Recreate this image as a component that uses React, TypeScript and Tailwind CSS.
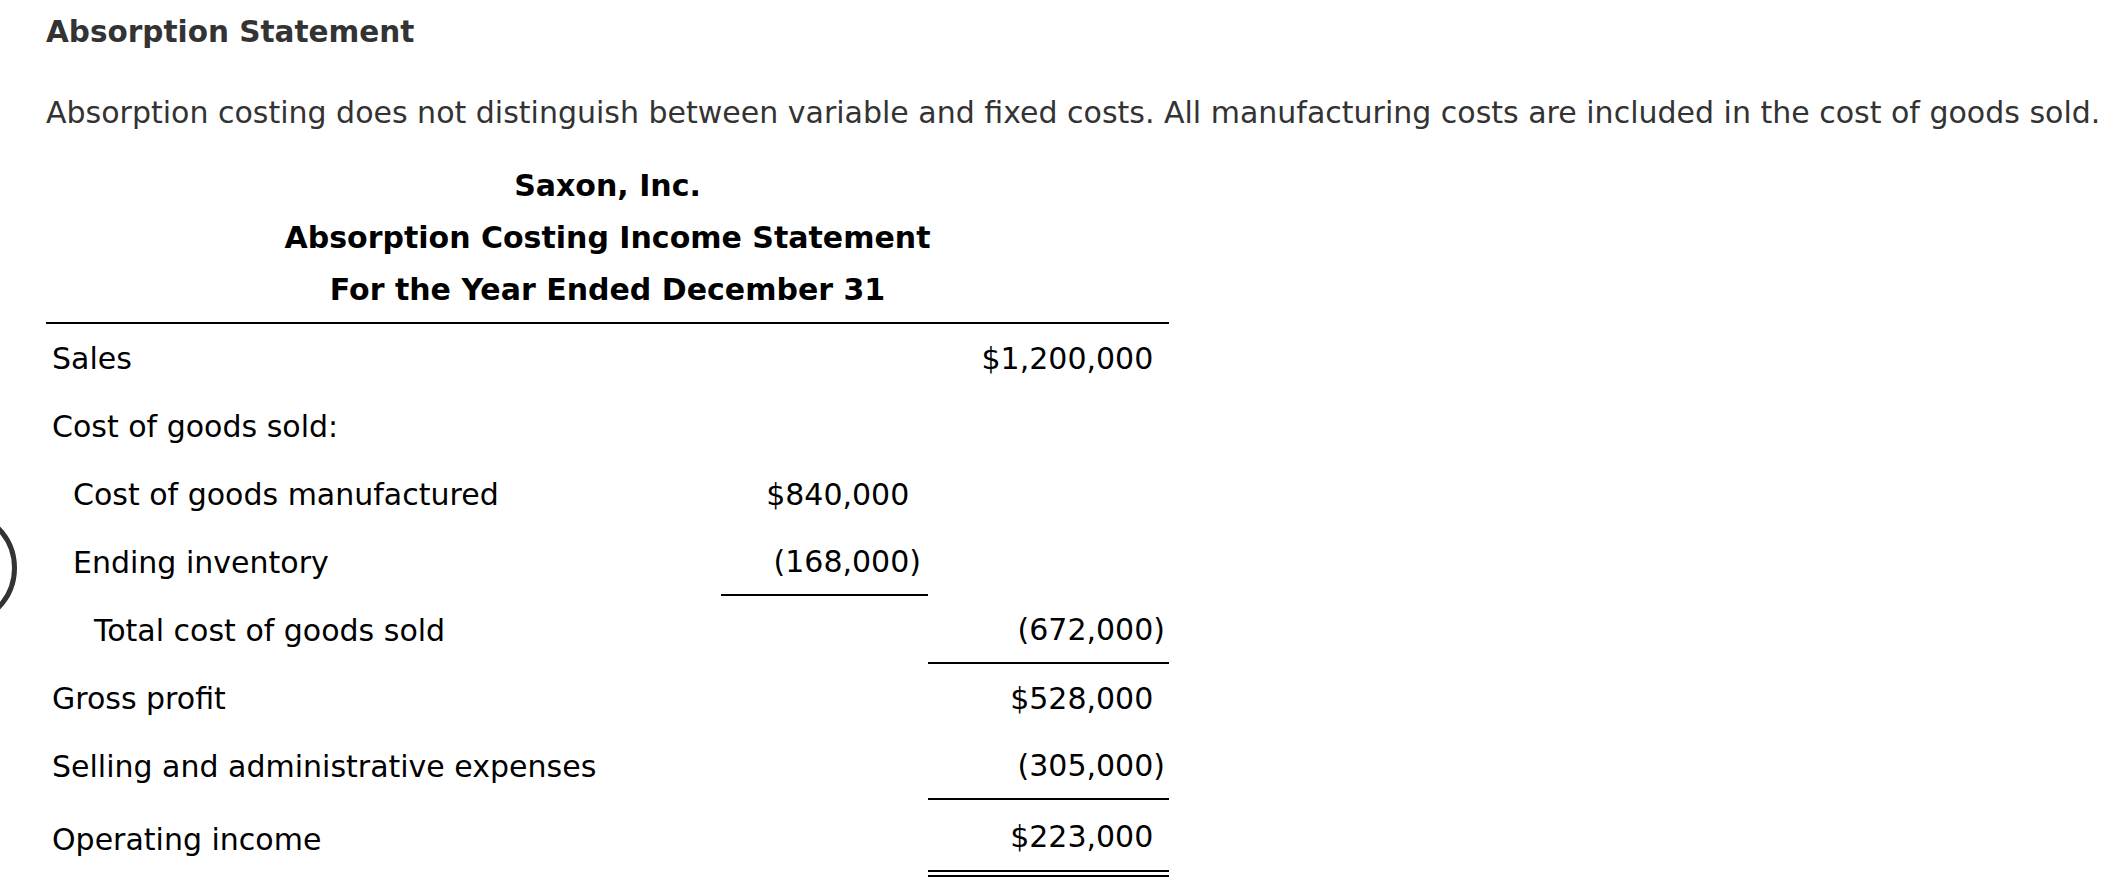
import React from "react";

type Row = {
  label: string;
  indent: 0 | 1 | 2;
  mid?: string;
  right?: string;
  midLine?: boolean;
  rightLine?: "single" | "double";
};

const rows: Row[] = [
  { label: "Sales", indent: 0, right: "$1,200,000" },
  { label: "Cost of goods sold:", indent: 0 },
  { label: "Cost of goods manufactured", indent: 1, mid: "$840,000" },
  { label: "Ending inventory", indent: 1, mid: "(168,000)", midLine: true },
  { label: "Total cost of goods sold", indent: 2, right: "(672,000)", rightLine: "single" },
  { label: "Gross profit", indent: 0, right: "$528,000" },
  { label: "Selling and administrative expenses", indent: 0, right: "(305,000)", rightLine: "single" },
  { label: "Operating income", indent: 0, right: "$223,000", rightLine: "double" },
];

function Amount({ value }: { value?: string }) {
  if (!value) return null;
  const neg = value.startsWith("(");
  return (
    <span>
      {value}
      {!neg && <span className="invisible">)</span>}
    </span>
  );
}

export default function App() {
  return (
    <div className="relative min-h-[892px] w-full overflow-hidden bg-white font-['DejaVu_Sans','Verdana',sans-serif]">
      {/* partial circular nav button at left edge */}
      <div className="absolute left-[-101px] top-[509px] h-[118px] w-[118px] rounded-full border-[5px] border-[#333]" />

      <div className="pl-[46px]">
        <h2 className="pt-[12px] text-[29.5px] font-bold leading-[40px] text-[#333]">
          Absorption Statement
        </h2>
        <p className="mt-[41px] whitespace-nowrap text-[30px] leading-[40px] text-[#333]">
          Absorption costing does not distinguish between variable and fixed costs. All manufacturing costs are included in the cost of goods sold.
        </p>

        <div className="mt-[27px] w-[1123px] text-[30px] text-black">
          <div className="flex flex-col items-center border-b-2 border-black pb-[6px] font-bold leading-[52px]">
            <div>Saxon, Inc.</div>
            <div>Absorption Costing Income Statement</div>
            <div>For the Year Ended December 31</div>
          </div>

          {rows.map((r, i) => (
            <div
              key={r.label}
              className={
                "grid grid-cols-[675px_207px_241px] items-stretch leading-[36px] " +
                (r.rightLine === "double" ? "h-[77px] pt-[3px]" : i === 0 ? "h-[68px] pt-[2px]" : "h-[68px] pt-[1px]")
              }
            >
              <div
                className={
                  "flex items-center whitespace-nowrap " +
                  (r.indent === 0 ? "pl-[6px]" : r.indent === 1 ? "pl-[27px]" : "pl-[48px]")
                }
              >
                {r.label}
              </div>
              <div
                className={
                  "flex items-center justify-end pr-[7px] " +
                  (r.midLine ? "border-b-2 border-black" : "")
                }
              >
                <Amount value={r.mid} />
              </div>
              <div
                className={
                  "flex items-center justify-end pr-[4px] " +
                  (r.rightLine === "single"
                    ? "border-b-2 border-black"
                    : r.rightLine === "double"
                    ? "border-b-[7px] border-double border-black"
                    : "")
                }
              >
                <Amount value={r.right} />
              </div>
            </div>
          ))}
        </div>
      </div>
    </div>
  );
}
